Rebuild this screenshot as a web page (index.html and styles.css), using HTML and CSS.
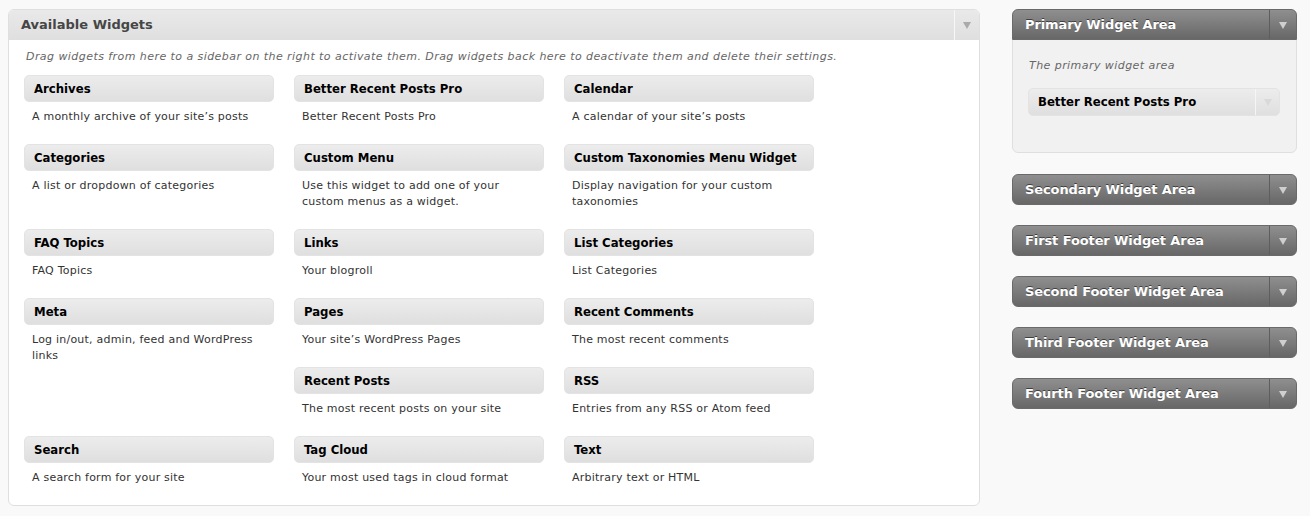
FILE: index.html
```html
<!DOCTYPE html>
<html>
<head>
<meta charset="utf-8">
<link rel="stylesheet" href="styles.css">
</head>
<body>
<div class="page">
  <div class="panel">
    <div class="panel-head">
      <div class="panel-title">Available Widgets</div>
      <div class="toggle light"><span class="arrow"></span></div>
    </div>
    <div class="panel-body">
      <p class="panel-desc">Drag widgets from here to a sidebar on the right to activate them. Drag widgets back here to deactivate them and delete their settings.</p>
      <div class="widgets">
        <div class="widget"><div class="widget-top">Archives</div><div class="widget-desc">A monthly archive of your site’s posts</div></div>
        <div class="widget"><div class="widget-top">Better Recent Posts Pro</div><div class="widget-desc">Better Recent Posts Pro</div></div>
        <div class="widget"><div class="widget-top">Calendar</div><div class="widget-desc">A calendar of your site’s posts</div></div>
        <div class="widget"><div class="widget-top">Categories</div><div class="widget-desc">A list or dropdown of categories</div></div>
        <div class="widget"><div class="widget-top">Custom Menu</div><div class="widget-desc">Use this widget to add one of your custom menus as a widget.</div></div>
        <div class="widget"><div class="widget-top">Custom Taxonomies Menu Widget</div><div class="widget-desc">Display navigation for your custom taxonomies</div></div>
        <div class="widget"><div class="widget-top">FAQ Topics</div><div class="widget-desc">FAQ Topics</div></div>
        <div class="widget"><div class="widget-top">Links</div><div class="widget-desc">Your blogroll</div></div>
        <div class="widget"><div class="widget-top">List Categories</div><div class="widget-desc">List Categories</div></div>
        <div class="widget"><div class="widget-top">Meta</div><div class="widget-desc">Log in/out, admin, feed and WordPress links</div></div>
        <div class="widget"><div class="widget-top">Pages</div><div class="widget-desc">Your site’s WordPress Pages</div></div>
        <div class="widget"><div class="widget-top">Recent Comments</div><div class="widget-desc">The most recent comments</div></div>
        <div class="widget"><div class="widget-top">Recent Posts</div><div class="widget-desc">The most recent posts on your site</div></div>
        <div class="widget"><div class="widget-top">RSS</div><div class="widget-desc">Entries from any RSS or Atom feed</div></div>
        <div class="widget"><div class="widget-top">Search</div><div class="widget-desc">A search form for your site</div></div>
        <div class="widget"><div class="widget-top">Tag Cloud</div><div class="widget-desc">Your most used tags in cloud format</div></div>
        <div class="widget"><div class="widget-top">Text</div><div class="widget-desc">Arbitrary text or HTML</div></div>
      </div>
    </div>
  </div>

  <div class="sidebars">
    <div class="sidebar open">
      <div class="sidebar-head">
        <div class="sidebar-title">Primary Widget Area</div>
        <div class="toggle dark"><span class="arrow"></span></div>
      </div>
      <div class="sidebar-body">
        <p class="sidebar-desc">The primary widget area</p>
        <div class="inner-widget">
          <div class="inner-title">Better Recent Posts Pro</div>
          <div class="toggle pale"><span class="arrow"></span></div>
        </div>
      </div>
    </div>
    <div class="sidebar"><div class="sidebar-head"><div class="sidebar-title">Secondary Widget Area</div><div class="toggle dark"><span class="arrow"></span></div></div></div>
    <div class="sidebar"><div class="sidebar-head"><div class="sidebar-title">First Footer Widget Area</div><div class="toggle dark"><span class="arrow"></span></div></div></div>
    <div class="sidebar"><div class="sidebar-head"><div class="sidebar-title">Second Footer Widget Area</div><div class="toggle dark"><span class="arrow"></span></div></div></div>
    <div class="sidebar"><div class="sidebar-head"><div class="sidebar-title">Third Footer Widget Area</div><div class="toggle dark"><span class="arrow"></span></div></div></div>
    <div class="sidebar"><div class="sidebar-head"><div class="sidebar-title">Fourth Footer Widget Area</div><div class="toggle dark"><span class="arrow"></span></div></div></div>
  </div>
</div>
</body>
</html>
```

FILE: styles.css
```css
html, body {
  margin: 0;
  padding: 0;
  background: #f9f9f9;
}
body {
  font-family: "DejaVu Sans", Verdana, sans-serif;
  color: #333;
}
.page {
  display: flex;
  align-items: flex-start;
  gap: 32px;
  padding: 9px 0 0 8px;
}

/* Available widgets panel */
.panel {
  width: 972px;
  box-sizing: border-box;
  border: 1px solid #dfdfdf;
  border-radius: 6px;
  background: #fff;
}
.panel-head {
  display: flex;
  height: 30px;
  background: linear-gradient(#e9e9e9, #dfdfdf);
  border-radius: 5px 5px 0 0;
}
.panel-title {
  flex: 1;
  padding-left: 12px;
  font-size: 13px;
  font-weight: bold;
  line-height: 30px;
  color: #464646;
}
.toggle {
  width: 24px;
  display: flex;
  align-items: center;
  justify-content: center;
}
.arrow {
  width: 0;
  height: 0;
  border-left: 4px solid transparent;
  border-right: 4px solid transparent;
  border-top: 7px solid #aaa;
  margin-top: 1px;
}
.toggle.light {
  border-left: 1px solid #f7f7f7;
}
.panel-body {
  padding: 0 15px;
}
.panel-desc {
  margin: 9px 0 10px 2px;
  font-size: 11px;
  line-height: 16px;
  font-style: italic;
  letter-spacing: 0.44px;
  color: #666;
}
.widgets {
  display: flow-root;
}
.widget {
  float: left;
  width: 250px;
  margin: 0 20px 16px 0;
}
.widget-top {
  box-sizing: border-box;
  height: 27px;
  padding-left: 9px;
  border: 1px solid #e3e3e3;
  border-radius: 5px;
  background: linear-gradient(#ececec, #dfdfdf);
  font-family: "DejaVu Sans Condensed", "DejaVu Sans", sans-serif;
  font-size: 13px;
  font-weight: bold;
  line-height: 25px;
  color: #000;
}
.widget-desc {
  padding: 7px 8px 3px;
  font-size: 11px;
  line-height: 16px;
  letter-spacing: 0.22px;
  color: #333;
}

/* Sidebars */
.sidebars {
  width: 285px;
  display: flex;
  flex-direction: column;
  gap: 20px;
}
.sidebar {
  border-radius: 6px;
}
.sidebar.open {
  border: 1px solid #dfdfdf;
  background: #f1f1f1;
  margin-bottom: 1px;
}
.sidebar-head {
  display: flex;
  height: 31px;
  box-sizing: border-box;
  border: 1px solid #6a6a6a;
  border-radius: 6px;
  background: linear-gradient(#8f8f8f, #676767);
}
.sidebar.open .sidebar-head {
  margin: -1px -1px 0;
  border-radius: 6px 6px 0 0;
}
.sidebar-title {
  flex: 1;
  padding-left: 12px;
  font-size: 13px;
  font-weight: bold;
  letter-spacing: -0.1px;
  line-height: 29px;
  color: #fff;
  text-shadow: 0 -1px 0 #3f3f3f;
}
.toggle.dark {
  width: 26px;
  border-left: 1px solid #5e5e5e;
}
.toggle.dark .arrow {
  border-top-color: #cfcfcf;
}
.sidebar-body {
  padding: 18px 16px 36px 15px;
}
.sidebar-desc {
  margin: 0 0 14px 1px;
  font-size: 11px;
  line-height: 16px;
  font-style: italic;
  letter-spacing: 0.44px;
  color: #666;
}
.inner-widget {
  display: flex;
  height: 28px;
  box-sizing: border-box;
  border: 1px solid #e3e3e3;
  border-radius: 5px;
  background: linear-gradient(#ececec, #dfdfdf);
}
.inner-title {
  flex: 1;
  padding-left: 9px;
  font-family: "DejaVu Sans Condensed", "DejaVu Sans", sans-serif;
  font-size: 13px;
  font-weight: bold;
  line-height: 26px;
  color: #000;
}
.toggle.pale {
  width: 23px;
  border-left: 1px solid #f5f5f5;
}
.toggle.pale .arrow {
  border-top-color: #d9d9d9;
}
```
